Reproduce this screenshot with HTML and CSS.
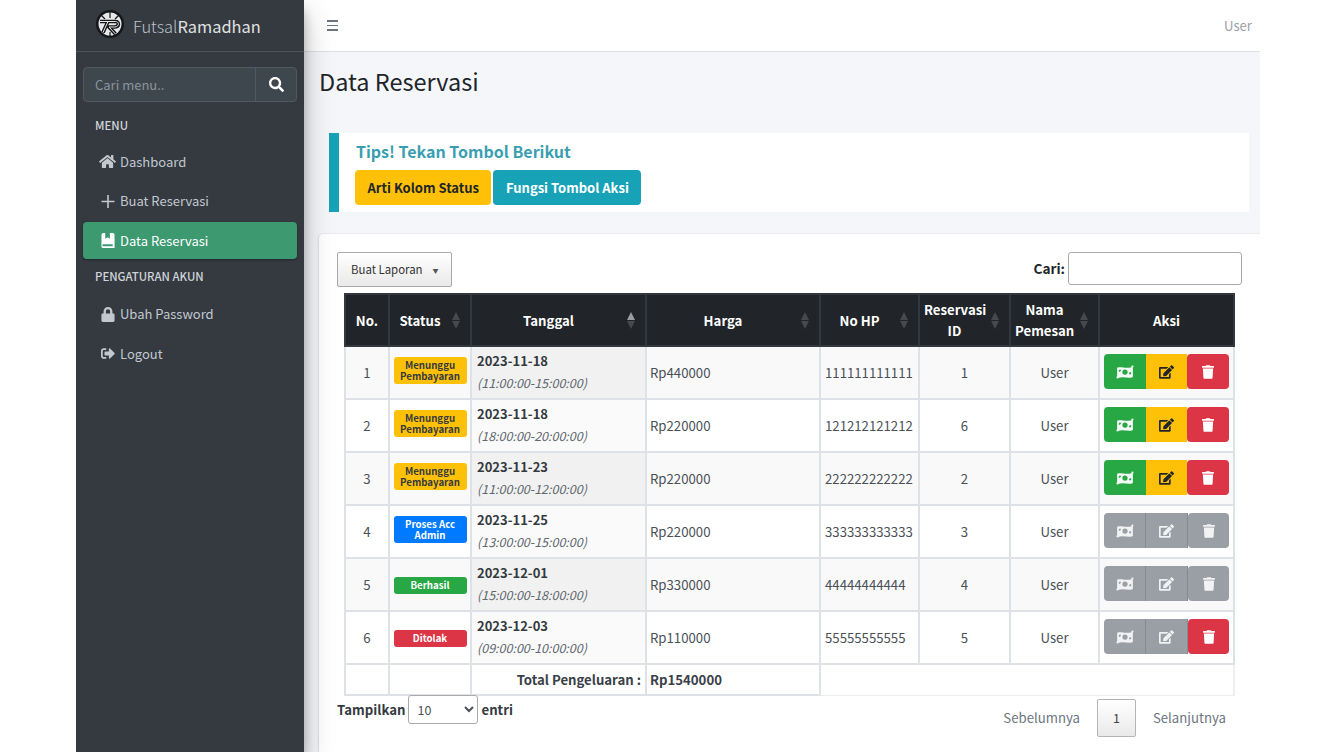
FILE: index.html
```html
<!DOCTYPE html>
<html lang="id">
<head>
<meta charset="utf-8">
<title>Data Reservasi</title>
<link rel="stylesheet" href="styles.css">
</head>
<body>
<svg class="defs" width="0" height="0" aria-hidden="true">
  <symbol id="i-money" viewBox="0 0 20 16"><path fill-rule="evenodd" d="M1 3.200c5-2 9 1.600 17-1 .6-.2 1 .2 1 .8v10c0 .5-.2.8-.6 1-5.400 1.800-10-1.600-16.800.9-.3 0-.6-.3-.6-.8V4c0-.4 0-.7 0-.8zM10 5a3 3 0 1 0 0 6 3 3 0 0 0 0-6zM3 5.500v2.500c1.400 0 2.500-1 2.500-2.500H3zM17 10.500v-2.500c-1.400 0-2.500 1-2.500 2.500H17z"/><circle cx="18.500" cy="1.800" r="1.300"/><circle cx="1.500" cy="14.200" r="1.300"/></symbol>
  <symbol id="i-edit" viewBox="0 0 576 512"><path d="M402.6 83.2l90.2 90.2c3.8 3.8 3.8 10 0 13.8L274.4 405.6l-92.8 10.3c-12.4 1.4-22.9-9.1-21.5-21.5l10.3-92.8L388.8 83.2c3.8-3.8 10-3.8 13.8 0zm162-22.9l-48.8-48.8c-15.2-15.2-39.9-15.2-55.2 0l-35.4 35.4c-3.8 3.8-3.8 10 0 13.8l90.2 90.2c3.8 3.8 10 3.8 13.8 0l35.4-35.4c15.2-15.3 15.2-40 0-55.2zM384 346.2V448H64V128h229.8c3.2 0 6.2-1.3 8.5-3.5l40-40c7.6-7.6 2.2-20.5-8.5-20.5H48C21.5 64 0 85.5 0 112v352c0 26.5 21.5 48 48 48h352c26.5 0 48-21.5 48-48V306.2c0-10.7-12.9-16-20.5-8.5l-40 40c-2.2 2.3-3.5 5.3-3.5 8.5z"/></symbol>
  <symbol id="i-trash" viewBox="0 0 448 512"><path d="M432 32H312l-9.4-18.7A24 24 0 0 0 281.1 0H166.8a23.72 23.72 0 0 0-21.4 13.3L136 32H16A16 16 0 0 0 0 48v32a16 16 0 0 0 16 16h416a16 16 0 0 0 16-16V48a16 16 0 0 0-16-16zM53.2 467a48 48 0 0 0 47.9 45h245.8a48 48 0 0 0 47.9-45L416 128H32z"/></symbol>
</svg>
<div class="frame">
  <aside class="sidebar">
    <div class="brand">
      <svg class="logo" viewBox="0 0 28 28" aria-hidden="true">
        <circle cx="14" cy="14" r="14" fill="#15171a"/>
        <circle cx="14" cy="14" r="11.500" fill="#e8e8e8"/>
        <path fill="none" stroke="#15171a" stroke-width="1.200" d="M14 2v6M5 5l4 4M23 5l-4 4M14 26v-4M6 24l3-3"/>
        <path fill="none" stroke="#15171a" stroke-width="3.600" d="M4 11.500h15.500c4 0 4 5.500-1 5.500h-5.500l6.500 7M12 11.500l-5 11"/>
        <path fill="none" stroke="#e8e8e8" stroke-width="1" d="M4 11.500h15.500c4 0 4 5.500-1 5.500h-5.500l6.500 7M12 11.500l-5 11"/>
      </svg>
      <span class="brand-text"><span class="brand-light">Futsal</span>Ramadhan</span>
    </div>
    <div class="search">
      <span class="search-input">Cari menu..</span>
      <span class="search-btn"><svg class="ic-search" viewBox="0 0 512 512" aria-hidden="true"><path d="M505 442.7L405.3 343c-4.5-4.5-10.6-7-17-7H372c27.6-35.3 44-79.7 44-128C416 93.1 322.9 0 208 0S0 93.1 0 208s93.1 208 208 208c48.3 0 92.7-16.4 128-44v16.3c0 6.4 2.5 12.5 7 17l99.7 99.7c9.4 9.4 24.6 9.4 33.9 0l28.3-28.3c9.4-9.4 9.4-24.6.1-34zM208 336c-70.7 0-128-57.2-128-128 0-70.7 57.2-128 128-128 70.7 0 128 57.2 128 128 0 70.7-57.2 128-128 128z"/></svg></span>
    </div>
    <nav class="nav">
      <div class="nav-head nav-head-first">MENU</div>
      <a class="nav-item"><span class="nav-icon"><svg class="ic-home" viewBox="0 0 576 512" aria-hidden="true"><path d="M280.37 148.26L96 300.11V464a16 16 0 0 0 16 16l112.06-.29a16 16 0 0 0 15.92-16V368a16 16 0 0 1 16-16h64a16 16 0 0 1 16 16v95.64a16 16 0 0 0 16 16.05L464 480a16 16 0 0 0 16-16V300L295.67 148.26a12.19 12.19 0 0 0-15.3 0zM571.6 251.47L488 182.56V44.05a12 12 0 0 0-12-12h-56a12 12 0 0 0-12 12v72.61L318.47 43a48 48 0 0 0-61 0L4.34 251.47a12 12 0 0 0-1.6 16.9l25.5 31A12 12 0 0 0 45.15 301l235.22-193.74a12.19 12.19 0 0 1 15.3 0L530.9 301a12 12 0 0 0 16.9-1.6l25.5-31a12 12 0 0 0-1.7-16.93z"/></svg></span>Dashboard</a>
      <a class="nav-item"><span class="nav-icon"><svg class="ic-side" viewBox="0 0 14 14" aria-hidden="true"><path d="M6.200 .5h1.600v5.700h5.700v1.600H7.800v5.700H6.200V7.800H.5V6.200h5.700z"/></svg></span>Buat Reservasi</a>
      <a class="nav-item nav-active"><span class="nav-icon"><svg class="ic-side" viewBox="0 0 14 16" aria-hidden="true"><path fill-rule="evenodd" d="M2 0h2v6l2.500-1.500L9 6V0h3c1 0 2 1 2 2v14H2c-1.200 0-2-.8-2-2V2C0 1 1 0 2 0zM2 12c-.6 0-1 .4-1 1s.4 1 1 1h10v-2z"/></svg></span>Data Reservasi</a>
      <div class="nav-head">PENGATURAN AKUN</div>
      <a class="nav-item"><span class="nav-icon"><svg class="ic-side" viewBox="0 0 448 512" aria-hidden="true"><path d="M400 224h-24v-72C376 68.2 307.8 0 224 0S72 68.2 72 152v72H48c-26.5 0-48 21.5-48 48v192c0 26.5 21.5 48 48 48h352c26.5 0 48-21.5 48-48V272c0-26.5-21.5-48-48-48zm-104 0H152v-72c0-39.7 32.3-72 72-72s72 32.3 72 72v72z"/></svg></span>Ubah Password</a>
      <a class="nav-item"><span class="nav-icon"><svg class="ic-side" viewBox="0 0 512 512" aria-hidden="true"><path d="M497 273L329 441c-15 15-41 4.5-41-17v-96H152c-13.3 0-24-10.7-24-24v-96c0-13.3 10.7-24 24-24h136V88c0-21.4 25.9-32 41-17l168 168c9.3 9.4 9.3 24.6 0 34zM192 436v-40c0-6.6-5.4-12-12-12H96c-17.7 0-32-14.3-32-32V160c0-17.7 14.3-32 32-32h84c6.6 0 12-5.4 12-12V76c0-6.6-5.4-12-12-12H96c-53 0-96 43-96 96v192c0 53 43 96 96 96h84c6.6 0 12-5.4 12-12z"/></svg></span>Logout</a>
    </nav>
  </aside>
  <div class="main">
    <header class="topbar">
      <span class="burger" aria-hidden="true"><i></i><i></i><i></i></span>
      <span class="user">User</span>
    </header>
    <main class="content">
      <h1 class="title">Data Reservasi</h1>
      <section class="callout">
        <h2 class="callout-title">Tips! Tekan Tombol Berikut</h2>
        <div class="callout-btns">
          <button class="tip tip-yellow">Arti Kolom Status</button>
          <button class="tip tip-teal">Fungsi Tombol Aksi</button>
        </div>
      </section>
      <section class="card">
        <div class="toolbar">
          <button class="report">Buat Laporan<span class="caret">▼</span></button>
          <label class="find">Cari:<span class="find-input"></span></label>
        </div>
        <table class="table">
          <colgroup><col class="c1"><col class="c2"><col class="c3"><col class="c4"><col class="c5"><col class="c6"><col class="c7"><col class="c8"></colgroup>
          <thead>
            <tr>
              <th>No.</th>
              <th class="sort">Status<span class="sorter"></span></th>
              <th class="sort">Tanggal<span class="sorter sorter-asc"></span></th>
              <th class="sort">Harga<span class="sorter"></span></th>
              <th class="sort">No HP<span class="sorter"></span></th>
              <th class="sort">Reservasi ID<span class="sorter"></span></th>
              <th class="sort">Nama Pemesan<span class="sorter"></span></th>
              <th>Aksi</th>
            </tr>
          </thead>
          <tbody>
            <tr class="odd">
              <td class="center">1</td><td><span class="badge b-yellow">Menunggu Pembayaran</span></td>
              <td class="date"><b>2023-11-18</b><em>(11:00:00-15:00:00)</em></td><td>Rp440000</td><td>111111111111</td><td class="center">1</td><td class="center">User</td>
              <td class="act"><div class="group"><span class="a a-green"><svg class="m"><use href="#i-money"/></svg></span><span class="a a-yellow"><svg class="e"><use href="#i-edit"/></svg></span><span class="a a-red"><svg class="t"><use href="#i-trash"/></svg></span></div></td>
            </tr>
            <tr>
              <td class="center">2</td><td><span class="badge b-yellow">Menunggu Pembayaran</span></td>
              <td class="date"><b>2023-11-18</b><em>(18:00:00-20:00:00)</em></td><td>Rp220000</td><td>121212121212</td><td class="center">6</td><td class="center">User</td>
              <td class="act"><div class="group"><span class="a a-green"><svg class="m"><use href="#i-money"/></svg></span><span class="a a-yellow"><svg class="e"><use href="#i-edit"/></svg></span><span class="a a-red"><svg class="t"><use href="#i-trash"/></svg></span></div></td>
            </tr>
            <tr class="odd">
              <td class="center">3</td><td><span class="badge b-yellow">Menunggu Pembayaran</span></td>
              <td class="date"><b>2023-11-23</b><em>(11:00:00-12:00:00)</em></td><td>Rp220000</td><td>222222222222</td><td class="center">2</td><td class="center">User</td>
              <td class="act"><div class="group"><span class="a a-green"><svg class="m"><use href="#i-money"/></svg></span><span class="a a-yellow"><svg class="e"><use href="#i-edit"/></svg></span><span class="a a-red"><svg class="t"><use href="#i-trash"/></svg></span></div></td>
            </tr>
            <tr>
              <td class="center">4</td><td><span class="badge b-blue">Proses Acc Admin</span></td>
              <td class="date"><b>2023-11-25</b><em>(13:00:00-15:00:00)</em></td><td>Rp220000</td><td>333333333333</td><td class="center">3</td><td class="center">User</td>
              <td class="act"><div class="group"><span class="a a-grey"><svg class="m"><use href="#i-money"/></svg></span><span class="a a-grey"><svg class="e"><use href="#i-edit"/></svg></span><span class="a a-grey"><svg class="t"><use href="#i-trash"/></svg></span></div></td>
            </tr>
            <tr class="odd">
              <td class="center">5</td><td><span class="badge b-green">Berhasil</span></td>
              <td class="date"><b>2023-12-01</b><em>(15:00:00-18:00:00)</em></td><td>Rp330000</td><td>44444444444</td><td class="center">4</td><td class="center">User</td>
              <td class="act"><div class="group"><span class="a a-grey"><svg class="m"><use href="#i-money"/></svg></span><span class="a a-grey"><svg class="e"><use href="#i-edit"/></svg></span><span class="a a-grey"><svg class="t"><use href="#i-trash"/></svg></span></div></td>
            </tr>
            <tr>
              <td class="center">6</td><td><span class="badge b-red">Ditolak</span></td>
              <td class="date"><b>2023-12-03</b><em>(09:00:00-10:00:00)</em></td><td>Rp110000</td><td>55555555555</td><td class="center">5</td><td class="center">User</td>
              <td class="act"><div class="group"><span class="a a-grey"><svg class="m"><use href="#i-money"/></svg></span><span class="a a-grey"><svg class="e"><use href="#i-edit"/></svg></span><span class="a a-red"><svg class="t"><use href="#i-trash"/></svg></span></div></td>
            </tr>
          </tbody>
          <tfoot>
            <tr>
              <td></td><td></td><th class="total">Total Pengeluaran :</th><th class="sum">Rp1540000</th><td class="rest" colspan="4"></td>
            </tr>
          </tfoot>
        </table>
        <div class="foot">
          <div class="length">Tampilkan<select class="select"><option>10</option></select>entri</div>
          <div class="pager"><span class="page-link">Sebelumnya</span><span class="page-cur">1</span><span class="page-link">Selanjutnya</span></div>
        </div>
      </section>
    </main>
  </div>
</div>
</body>
</html>
```
FILE: styles.css
```css
* { box-sizing: border-box; }
html, body { margin: 0; height: 100%; background: #fff; overflow: hidden; }
body { font-family: "Noto Sans CJK JP", "Noto Sans", sans-serif; font-size: 13px; color: #212529; }
.defs { position: absolute; }
.frame { display: flex; width: 1184px; height: 752px; margin-left: 76px; overflow: hidden; }

.sidebar { flex: 0 0 228px; background: #343a40; color: #c2c7d0; box-shadow: 0 14px 28px rgba(0,0,0,.25), 0 10px 10px rgba(0,0,0,.22); position: relative; z-index: 2; }
.brand { display: flex; align-items: center; height: 52px; padding-left: 20px; border-bottom: 1px solid #4b545c; }
.logo { width: 28px; height: 28px; margin: -4px 9px 0 0; }
.brand-text { font-size: 16.4px; line-height: 28px; color: #fff; opacity: .85; }
.brand-light { font-weight: 300; color: #d5dae0; }
.search { display: flex; height: 35px; margin: 15px 7px 0; border: 1px solid #4f5962; border-radius: 4px; background: #3f474e; }
.search-input { flex: 1; padding-left: 11px; font-size: 13px; line-height: 33px; color: #8b949c; }
.search-btn { display: flex; flex: 0 0 41px; align-items: center; justify-content: center; border-left: 1px solid #4f5962; }
.ic-search { width: 15px; height: 15px; fill: #fff; }

.nav { padding: 0 7px; }
.nav-head { height: 34px; padding-left: 12px; font-size: 11.4px; font-weight: 500; line-height: 29px; color: #d0d4db; }
.nav-head-first { height: 41px; line-height: 46px; }
.nav-item { display: flex; align-items: center; height: 37px; margin-bottom: 2.5px; padding-left: 14px; font-size: 13px; line-height: 20px; color: #c2c7d0; }
.nav-icon { display: flex; flex: 0 0 21px; align-items: center; justify-content: center; margin-right: 2px; }
.nav-icon svg { fill: #c2c7d0; }
.ic-home { width: 19px; height: 15px; }
.ic-side { width: 14px; height: 15px; }
.nav-active { background: #3d9970; color: #fff; border-radius: 4px; box-shadow: 0 1px 3px rgba(0,0,0,.12), 0 1px 2px rgba(0,0,0,.24); }
.nav-active .nav-icon svg { fill: #fff; }

.main { flex: 1; min-width: 0; display: flex; flex-direction: column; background: #f4f6f9; }
.topbar { display: flex; flex: 0 0 52px; align-items: center; justify-content: space-between; padding: 0 8px 0 23px; background: #fff; border-bottom: 1px solid #dee2e6; }
.burger { display: flex; flex-direction: column; gap: 3px; width: 11px; }
.burger i { display: block; height: 1.5px; background: #6c757d; }
.user { font-size: 13.2px; color: #9aa0a6; }

.content { flex: 1; padding: 0 0 0 15px; }
.title { margin: 0; height: 81px; padding-top: 12px; font-size: 23.5px; font-weight: 400; line-height: 34px; color: #212529; }
.callout { height: 79px; margin: 0 11px 0 10px; padding: 7px 0 0 17px; background: #fff; border-left: 10px solid #17a2b8; }
.callout-title { margin: 0; font-size: 16px; font-weight: 700; line-height: 23px; color: #3a9eb1; }
.callout-btns { display: flex; gap: 2px; margin: 7px 0 0 -1px; }
.tip { height: 35px; padding: 0 12.5px; border: 0; border-radius: 4px; font: 700 13px/35px "Noto Sans CJK JP", sans-serif; }
.tip-yellow { background: #ffc107; color: #212529; }
.tip-teal { background: #17a2b8; color: #fff; }

.card { height: 540px; margin-top: 22px; padding: 18px 18px 0; background: #fff; border-radius: 4px 0 0 0; box-shadow: 0 0 1px rgba(0,0,0,.125), 0 1px 3px rgba(0,0,0,.2); }
.toolbar { display: flex; justify-content: space-between; height: 41px; }
.report { width: 115px; height: 35px; padding: 0 0 0 13px; text-align: left; border: 1px solid #a9a9a9; border-radius: 2px; background: linear-gradient(#fff, #e9e9e9); font: 400 11.4px/33px "Noto Sans CJK JP", sans-serif; color: #333; }
.caret { margin-left: 10px; font-size: 6px; vertical-align: 1px; color: #555; }
.find { display: flex; gap: 3px; font-size: 13.6px; font-weight: 700; line-height: 33px; }
.find-input { display: block; width: 174px; height: 33px; background: #fff; border: 1px solid #aaa; border-radius: 3px; }

.table { width: 889px; height: 401px; margin-left: 7px; border-collapse: collapse; table-layout: fixed; color: #495057; font-size: 13.2px; }
.c1 { width: 44px; } .c2 { width: 82px; } .c3 { width: 175px; } .c4 { width: 174px; }
.c5 { width: 99px; } .c6 { width: 91px; } .c7 { width: 89px; } .c8 { width: 135px; }
.table th, .table td { border: 2px solid #dee2e6; }
thead th { position: relative; height: 52px; padding: 0 4px; background: #212529; border-color: #32383e !important; color: #fff; font-size: 13.2px; font-weight: 700; line-height: 21px; text-align: center; }
thead th.sort { padding: 0 24px 0 4px; }
.sorter { position: absolute; top: 17px; right: 9px; width: 9px; height: 17px; }
.sorter::before, .sorter::after { content: ""; position: absolute; left: 0; border-left: 4.5px solid transparent; border-right: 4.5px solid transparent; }
.sorter::before { top: 0; border-bottom: 8.5px solid #46494d; }
.sorter::after { bottom: 0; border-top: 8.5px solid #46494d; }
.sorter-asc::before { border-bottom-color: #9b9d9f; }
tbody td { height: 53px; padding: 0 4px; line-height: 20px; }
tbody td:nth-child(4) { padding-left: 3px; }
.odd td { background: #f9f9f9; }
.center { text-align: center; }
.table td.date { padding: 0 4px 2px 5px; line-height: 22px; background: #fafafa; }
.odd td.date { background: #f1f1f1; }
.date b { display: block; color: #343a40; font-weight: 700; font-size: 13px; }
.date em { display: block; font-style: italic; font-size: 12.5px; color: #60676e; }
tbody td:nth-child(2) { padding: 0 3px; }
.badge { display: block; width: 73px; margin: 0 auto; border-radius: 3px; font-size: 9.7px; font-weight: 700; line-height: 11px; text-align: center; color: #fff; }
.b-yellow, .b-blue { padding: 2.5px 2px; margin-bottom: 4px; }
.b-yellow { background: #ffc107; color: #343a40; }
.b-blue { background: #007bff; }
.b-green, .b-red { padding: 3px 2px; margin-top: 2px; }
.b-green { background: #28a745; }
.b-red { background: #dc3545; }
.table td.act { padding: 0 4px 2px; }
.group { display: flex; width: 125px; height: 35px; margin: 0 auto; }
.a { display: flex; flex: 1; align-items: center; justify-content: center; }
.a:first-child { border-radius: 4px 0 0 4px; }
.a:last-child { border-radius: 4px; }
.a-green { background: #28a745; fill: #f4fbf6; }
.a-yellow { background: #ffc107; fill: #212529; }
.a-red { background: #dc3545; fill: #fff; }
.a-grey { background: #9a9fa5; fill: #f1f2f3; border-right: 1px solid #868b91; }
.a-grey:last-child { border-right: 0; }
.m { width: 18px; height: 14px; }
.e { width: 15px; height: 14px; }
.t { width: 12px; height: 14px; }
tfoot th, tfoot td { height: 31px; padding: 0 4px 1px; font-size: 13.2px; }
.total { text-align: right; font-weight: 700; color: #3a4047; }
.table .sum { padding-left: 3px; text-align: left; font-weight: 700; color: #3a4047; }
.table .rest { border-width: 0 2px 1px 0; border-color: #eceef0; }

.foot { display: flex; justify-content: space-between; align-items: flex-start; margin-top: -1px; }
.length { display: flex; align-items: flex-start; gap: 3px; font-size: 13.2px; font-weight: 700; line-height: 29px; color: #343a40; }
.select { width: 70px; height: 29px; padding: 0 0 0 4px; background: #fff; border: 1px solid #aaa; border-radius: 3px; font: 400 12.5px "Noto Sans CJK JP", sans-serif; color: #495057; }
.pager { display: flex; align-items: center; gap: 17px; margin: 4px 16px 0 0; font-size: 13.2px; color: #6c757d; }
.page-link { line-height: 38px; }
.page-cur { width: 39px; height: 38px; font-size: 12.5px; line-height: 36px; text-align: center; color: #444; border: 1px solid #b5b5b5; border-radius: 2px; background: linear-gradient(#fff, #e9e9e9); }
```
